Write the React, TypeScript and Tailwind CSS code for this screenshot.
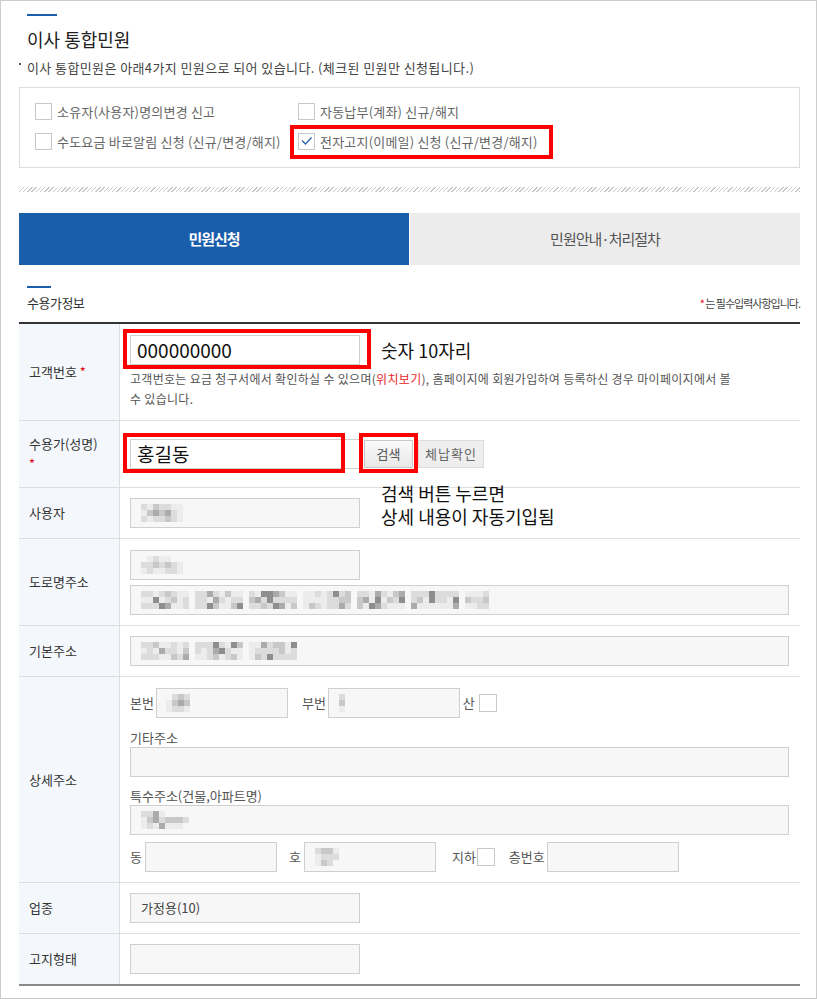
import type { ReactNode } from "react";

const FONT = "font-['Noto_Sans_CJK_KR','Noto_Sans',sans-serif]";

const SHADES = [
  "",
  "bg-[#ececec]",
  "bg-[#dcdcdc]",
  "bg-[#c8c8c8]",
  "bg-[#ababab]",
  "bg-[#8e8e8e]",
];

// pseudo-random mosaic used for the blurred personal data
function noise(cols: number, rows: number, seed: number, gapEvery = 0): string[] {
  let s = seed;
  const weights = "1111222223345";
  const out: string[] = [];
  for (let r = 0; r < rows; r++) {
    let line = "";
    for (let c = 0; c < cols; c++) {
      s = (Math.imul(s, 1103515245) + 12345) & 0x7fffffff;
      const gap = gapEvery > 0 && c % gapEvery === gapEvery - 1;
      line += gap ? "0" : weights[(s >> 9) % weights.length];
    }
    out.push(line);
  }
  return out;
}

function Mosaic({ rows }: { rows: string[] }) {
  return (
    <div className="flex flex-col">
      {rows.map((row, r) => (
        <div key={r} className="flex">
          {row.split("").map((d, c) => (
            <span key={c} className={`w-[6px] h-[6px] ${SHADES[Number(d)]}`} />
          ))}
        </div>
      ))}
    </div>
  );
}

function Field({
  className = "",
  white = false,
  children,
}: {
  className?: string;
  white?: boolean;
  children?: ReactNode;
}) {
  return (
    <div
      className={`h-[30px] shrink-0 border border-[#cfcfcf] flex items-center ${
        white ? "bg-white px-[6px]" : "bg-[#f7f7f7] px-[10px]"
      } ${className}`}
    >
      {children}
    </div>
  );
}

function Check({ checked = false, small = false }: { checked?: boolean; small?: boolean }) {
  return (
    <span
      className={`${
        small ? "w-[18px] h-[18px]" : "w-[17px] h-[17px]"
      } shrink-0 border border-[#c8c8c8] bg-white flex items-center justify-center`}
    >
      {checked && (
        <svg width="15" height="15" viewBox="0 0 15 15">
          <path d="M3 6.5 L6.5 10 L12.5 3.5" fill="none" stroke="#2b62ad" strokeWidth="1.3" />
        </svg>
      )}
    </span>
  );
}

function RedBox({ className }: { className: string }) {
  return <span className={`absolute border-[4px] border-[#ff0000] pointer-events-none ${className}`} />;
}

function Row({
  label,
  h,
  last = false,
  cell = "items-center",
  children,
}: {
  label: ReactNode;
  h: string;
  last?: boolean;
  cell?: string;
  children: ReactNode;
}) {
  return (
    <div className={`flex ${h} ${last ? "" : "border-b border-[#dedede]"}`}>
      <div className="w-[101px] shrink-0 bg-[#f4f8fc] border-r border-[#dedede] flex items-center pl-[10px] text-[13px] leading-[20px] text-[#333]">
        {label}
      </div>
      <div className={`relative flex-1 flex pl-[10px] pr-[11px] ${cell}`}>{children}</div>
    </div>
  );
}

const Req = () => <span className="text-[#e60012] ml-[3px]">*</span>;

export default function App() {
  return (
    <div className={`w-[817px] h-[999px] border border-[#cccccc] bg-white pl-[18px] pr-[16px] ${FONT}`}>
      <div className="pl-[8px] pt-[13px]">
        <div className="w-[30px] h-[2px] bg-[#1a5dab]" />
        <h1 className="mt-[11px] text-[18px] leading-[24px] text-[#222]">이사 통합민원</h1>
      </div>
      <p className="mt-[7px] flex items-start text-[13px] leading-[20px] text-[#444] tracking-[0.4px]">
        <span className="w-[2px] h-[2px] bg-[#555] mt-[5px] mr-[6px]" />
        이사 통합민원은 아래4가지 민원으로 되어 있습니다. (체크된 민원만 신청됩니다.)
      </p>

      <div className="mt-[9px] border border-[#dddddd] pt-[15px] pb-[17px] pl-[15px]">
        <div className="grid grid-cols-[263px_1fr] gap-y-[13px] text-[13px] text-[#666] tracking-[0.2px]">
          <label className="flex items-center h-[17px] gap-[5px]">
            <Check />
            소유자(사용자)명의변경 신고
          </label>
          <label className="flex items-center h-[17px] gap-[5px]">
            <Check />
            자동납부(계좌) 신규/해지
          </label>
          <label className="flex items-center h-[17px] gap-[5px]">
            <Check />
            수도요금 바로알림 신청 (신규/변경/해지)
          </label>
          <label className="relative flex items-center h-[17px] gap-[5px]">
            <Check checked />
            전자고지(이메일) 신청 (신규/변경/해지)
            <RedBox className="left-[-8px] top-[-8px] w-[263px] h-[34px]" />
          </label>
        </div>
      </div>

      <div className="mt-[19px] h-[5px] bg-[repeating-linear-gradient(135deg,#c9c9c9_0px,#c9c9c9_1px,transparent_1px,transparent_3px)]" />

      <div className="mt-[21px] grid grid-cols-2 gap-px h-[52px] text-[15px] tracking-[-1px]">
        <div className="bg-[#1a5dab] text-white font-bold flex items-center justify-center">민원신청</div>
        <div className="bg-[#ececec] text-[#555] flex items-center justify-center">민원안내·처리절차</div>
      </div>

      <div className="mt-[21px] ml-[8px] w-[24px] h-[2px] bg-[#1a5dab]" />
      <div className="mt-[5px] h-[20px] flex items-center justify-between">
        <span className="pl-[8px] text-[13px] text-[#333] tracking-[-0.5px]">수용가정보</span>
        <span className="text-[11px] text-[#444] tracking-[-1px]">
          <span className="text-[#e60012]">*</span> 는 필수입력사항입니다.
        </span>
      </div>

      <div className="mt-[9px] border-t-2 border-[#333] border-b-2 border-b-[#8a8a8a]">
        <Row
          h="h-[97px]"
          cell="flex-col justify-center"
          label={
            <>
              고객번호
              <Req />
            </>
          }
        >
          <div className="flex items-center">
            <div className="relative">
              <Field white className="w-[230px] text-[19px] text-[#111]">
                000000000
              </Field>
              <RedBox className="left-[-7px] top-[-6px] w-[248px] h-[40px]" />
            </div>
            <span className="ml-[21px] text-[18px] leading-none text-[#111]">숫자 10자리</span>
          </div>
          <p className="mt-[4px] text-[12px] leading-[20px] text-[#555] tracking-[0.3px]">
            <span className="whitespace-nowrap">
              고객번호는 요금 청구서에서 확인하실 수 있으며(<span className="text-[#e8262a]">위치보기</span>),
              홈페이지에 회원가입하여 등록하신 경우 마이페이지에서 볼
            </span>
            <br />수 있습니다.
          </p>
        </Row>

        <Row
          h="h-[67px]"
          label={
            <span>
              수용가(성명)
              <br />
              <span className="text-[#e60012]">*</span>
            </span>
          }
        >
          <div className="relative">
            <Field white className="w-[230px] text-[19px] text-[#111]">
              홍길동
            </Field>
            <RedBox className="left-[-7px] top-[-6px] w-[222px] h-[40px]" />
          </div>
          <div className="relative ml-[4px]">
            <button className="w-[49px] h-[28px] border border-[#c8c8c8] bg-[linear-gradient(#fafafa,#e8e8e8)] text-[13px] text-[#555]">
              검색
            </button>
            <RedBox className="left-[-5px] top-[-7px] w-[59px] h-[40px]" />
          </div>
          <button className="ml-[5px] w-[66px] h-[28px] border border-[#dadada] bg-[#eeeeee] text-[13px] text-[#666] tracking-[1px]">
            체납확인
          </button>
        </Row>

        <Row h="h-[51px]" label="사용자">
          <Field className="w-[230px]">
            <Mosaic rows={["2132211", "1343421", "2122321"]} />
          </Field>
          <div className="absolute left-[261px] top-[-6px] text-[18px] leading-[23px] text-[#111] pointer-events-none">
            검색 버튼 누르면
            <br />
            상세 내용이 자동기입됨
          </div>
        </Row>

        <Row h="h-[87px]" label="도로명주소" cell="flex-col justify-center gap-[5px]">
          <Field className="w-[230px]">
            <Mosaic rows={["0121100", "2232321", "1211221"]} />
          </Field>
          <Field>
            <Mosaic rows={noise(58, 3, 7, 9)} />
          </Field>
        </Row>

        <Row h="h-[51px]" label="기본주소">
          <Field className="flex-1">
            <Mosaic rows={noise(26, 3, 31, 9)} />
          </Field>
        </Row>

        <Row h="h-[206px]" label="상세주소" cell="flex-col justify-center">
          <div className="flex items-center text-[13px] text-[#555]">
            <span>본번</span>
            <Field className="ml-[2px] w-[132px] pl-[9px]">
              <Mosaic rows={["02320", "13430", "12210"]} />
            </Field>
            <span className="ml-[14px]">부번</span>
            <Field className="ml-[2px] w-[132px]">
              <Mosaic rows={["2", "3", "1"]} />
            </Field>
            <span className="ml-[3px]">산</span>
            <span className="ml-[4px]">
              <Check small />
            </span>
          </div>
          <div className="mt-[10px] text-[13px] leading-[19px] text-[#555]">기타주소</div>
          <Field />
          <div className="mt-[9px] text-[13px] leading-[19px] text-[#555]">특수주소(건물,아파트명)</div>
          <Field>
            <Mosaic rows={["224100000", "134233320", "121411100"]} />
          </Field>
          <div className="mt-[7px] flex items-center text-[13px] text-[#555]">
            <span>동</span>
            <Field className="ml-[3px] w-[132px]" />
            <span className="ml-[12px]">호</span>
            <Field className="ml-[3px] w-[132px]">
              <Mosaic rows={["23310", "12220", "13200"]} />
            </Field>
            <span className="ml-[16px]">지하</span>
            <span className="ml-[1px]">
              <Check small />
            </span>
            <span className="ml-[14px]">층번호</span>
            <Field className="ml-[2px] w-[132px]" />
          </div>
        </Row>

        <Row h="h-[51px]" label="업종">
          <Field className="w-[230px] text-[13px] text-[#444]">가정용(10)</Field>
        </Row>

        <Row h="h-[50px]" label="고지형태" last>
          <Field className="w-[230px]" />
        </Row>
      </div>
    </div>
  );
}
